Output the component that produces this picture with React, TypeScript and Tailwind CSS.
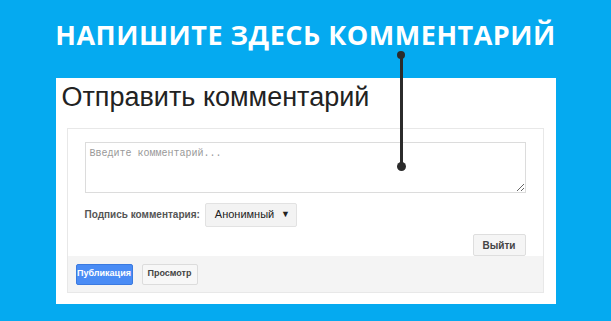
import React from "react";

function Pointer() {
    // annotation line from the headline to the textarea
    return (
        <div className="absolute left-[397px] top-[51px] w-[8px] h-[120px] pointer-events-none">
            <div className="absolute left-0 top-0 w-[8px] h-[8px] rounded-full bg-[#2b2b2b]"></div>
            <div className="absolute left-[2.5px] top-[4px] w-[3px] h-[112px] bg-[#2b2b2b]"></div>
            <div className="absolute left-0 bottom-0 w-[9px] h-[9px] rounded-full bg-[#2b2b2b]"></div>
        </div>
    );
}

export default function App() {
    return (
        <div className="relative w-[611px] h-[321px] bg-[#05aaf0] overflow-hidden font-['Liberation_Sans',Arial,sans-serif]">
            <h1 className="pt-[20px] h-[78px] text-center text-white font-bold text-[27px] leading-[30px] tracking-[0.5px] font-['Open_Sans','DejaVu_Sans',sans-serif]">
                НАПИШИТЕ ЗДЕСЬ КОММЕНТАРИЙ
            </h1>

            <div className="mx-auto w-[500px] h-[226px] bg-white flex flex-col">
                <h2 className="pl-[6px] pt-[1px] h-[50px] text-[27px] leading-[36px] text-[#222] font-normal">
                    Отправить комментарий
                </h2>

                <div className="mx-[11px] mr-[12px] border border-[#e8e8e8] flex flex-col h-[165px]">
                    <div className="px-[17px] pt-[13px] flex flex-col">
                        <textarea
                            className="h-[51px] w-full border border-[#dcdcdc] px-[4px] py-[5px] text-[10px] leading-[12px] font-['Liberation_Mono','DejaVu_Sans_Mono',monospace] text-[#444] placeholder:text-[#999] resize-y outline-none"
                            placeholder="Введите комментарий..."
                        ></textarea>

                        <div className="mt-[9px] flex items-center h-[25px]">
                            <span className="text-[10px] font-bold text-[#555] mr-[5px]">
                                Подпись комментария:
                            </span>
                            <div className="w-[92px] h-[24px] bg-[#f3f3f3] border border-[#e2e2e2] rounded-[2px] flex items-center justify-between pl-[9px] pr-[6px] text-[11px] text-[#222]">
                                <span>Анонимный</span>
                                <span className="text-[9px]">▼</span>
                            </div>
                        </div>

                        <div className="mt-[7px] flex justify-end">
                            <button className="w-[53px] h-[22px] bg-[#f5f5f5] border border-[#dedede] rounded-[2px] text-[10px] font-bold text-[#444]">
                                Выйти
                            </button>
                        </div>
                    </div>

                    <div className="flex-1 bg-[#f4f4f4] flex items-center gap-[9px] px-[8px]">
                        <button className="w-[57px] h-[21px] bg-[#4a8cf5] border border-[#3b7ae0] rounded-[2px] text-[9px] font-bold text-white overflow-hidden whitespace-nowrap">
                            Публикация
                        </button>
                        <button className="w-[56px] h-[21px] bg-[#f7f7f7] border border-[#dcdcdc] rounded-[2px] text-[9px] font-bold text-[#444]">
                            Просмотр
                        </button>
                    </div>
                </div>
            </div>

            <Pointer />
        </div>
    );
}
